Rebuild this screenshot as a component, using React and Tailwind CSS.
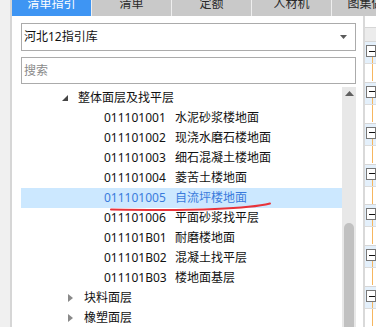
import React from "react";

const tabs = ["清单", "定额", "人材机", "图集做法"];

const items = [
    { code: "011101001", name: "水泥砂浆楼地面" },
    { code: "011101002", name: "现浇水磨石楼地面" },
    { code: "011101003", name: "细石混凝土楼地面" },
    { code: "011101004", name: "菱苦土楼地面" },
    { code: "011101005", name: "自流坪楼地面", selected: true },
    { code: "011101006", name: "平面砂浆找平层" },
    { code: "011101B01", name: "耐磨楼地面" },
    { code: "011101B02", name: "混凝土找平层" },
    { code: "011101B03", name: "楼地面基层" },
];

const Expanded = () => (
    <svg width="6" height="6" viewBox="0 0 6 6" className="block">
        <polygon points="6,0 6,6 0,6" fill="#454545" />
    </svg>
);

const Collapsed = () => (
    <svg width="5" height="8" viewBox="0 0 5 8" className="block">
        <polygon points="0,0 5,4 0,8" fill="#8a8a8a" />
    </svg>
);

const RightGroup = () => (
    <div className="flex flex-col h-[46px] border-t border-[#d6d6d6]">
        <div className="bg-[#e4f0fb] border-b border-[#dcdcdc] h-[22px] pt-[3px] flex flex-col">
            <div className="h-[12px] ml-[1px] border border-[#777777] bg-white flex items-center pl-[2px]">
                <div className="w-[8px] h-[1px] bg-[#111]" />
            </div>
            <div className="ml-[7px] w-[1px] flex-1 bg-[#f6b65e]" />
        </div>
        <div className="ml-[7px] w-[1px] h-[17px] bg-[#f6b65e]" />
    </div>
);

const App = () => {
    return (
        <div className="w-[376px] h-[327px] overflow-hidden flex bg-white text-[12px] text-[#111] relative font-['Noto_Sans','Noto_Sans_CJK_SC',sans-serif]">
            <div className="w-[12px] shrink-0 bg-[#f0f0f0] border-r-2 border-[#d6d6d6]" />
            <div className="flex-1 flex flex-col min-w-0">
                {/* tab bar */}
                <div className="h-[16px] shrink-0 flex bg-[#eeeeee] overflow-hidden">
                    <div className="w-[79px] shrink-0 bg-[#3e95f3] text-white flex justify-center leading-[12px] -mt-[2px]">
                        清单指引
                    </div>
                    {tabs.map((t) => (
                        <div
                            key={t}
                            className="w-[79px] shrink-0 ml-[1px] bg-[#c9c9c9] text-[#2a2a2a] flex justify-center leading-[12px] -mt-[2px] pt-[2px]"
                        >
                            <span className="-mt-[2px]">{t}</span>
                        </div>
                    ))}
                </div>
                <div className="flex flex-1 min-h-0">
                    {/* main panel */}
                    <div className="w-[351px] shrink-0 pl-[9px] pr-[7px] pt-[7px] flex flex-col">
                        <div className="h-[28px] border border-[#ababab] flex items-center justify-between pl-[2px] pr-[8px]">
                            <span>河北12指引库</span>
                            <svg width="7" height="4" viewBox="0 0 7 4">
                                <polygon points="0,0 7,0 3.5,4" fill="#5a5a5a" />
                            </svg>
                        </div>
                        <div className="h-[27px] mt-[6px] border border-[#ababab] flex items-center pl-[2px] text-[#8a8a8a]">
                            搜索
                        </div>
                        <div className="flex flex-1 mt-[3px] min-h-0">
                            <div className="flex-1 pt-[1px] overflow-hidden">
                                <div className="h-[20px] flex items-center">
                                    <div className="w-[47px] shrink-0 flex justify-end pr-[0px]">
                                        <Expanded />
                                    </div>
                                    <span className="ml-[10px]">整体面层及找平层</span>
                                </div>
                                {items.map((it) => (
                                    <div
                                        key={it.code}
                                        className={`h-[20px] flex items-center pl-[83px] ${
                                            it.selected ? "bg-[#cce8ff] text-[#3a7bdc]" : ""
                                        }`}
                                    >
                                        <span className="w-[71px] shrink-0">{it.code}</span>
                                        <span>{it.name}</span>
                                    </div>
                                ))}
                                {["块料面层", "橡塑面层"].map((n) => (
                                    <div key={n} className="h-[20px] flex items-center">
                                        <div className="w-[52px] shrink-0 flex justify-end">
                                            <Collapsed />
                                        </div>
                                        <span className="ml-[11px]">{n}</span>
                                    </div>
                                ))}
                            </div>
                            {/* scrollbar */}
                            <div className="w-[14px] shrink-0 bg-[#e8e8e8] flex flex-col items-center">
                                <svg width="9" height="5" viewBox="0 0 9 5" className="mt-[4px]">
                                    <polygon points="0,5 9,5 4.5,0" fill="#606060" />
                                </svg>
                                <div className="mt-[127px] w-[10px] flex-1 bg-[#c1c1c1] rounded-t-full" />
                            </div>
                        </div>
                    </div>
                    {/* right strip */}
                    <div className="flex-1 border-l-2 border-[#d9d9d9] flex flex-col overflow-hidden">
                        <div className="h-[11px] shrink-0" />
                        <div className="h-[14px] shrink-0 bg-[#ececec] border-t border-[#d6d6d6]" />
                        {Array.from({ length: 7 }).map((_, i) => (
                            <RightGroup key={i} />
                        ))}
                    </div>
                </div>
            </div>
            {/* hand-drawn red mark */}
            <svg className="absolute left-0 top-0 pointer-events-none" width="376" height="327">
                <path
                    d="M111 209.5 C140 210, 180 210.5, 215 209 C240 208, 258 206.5, 270 203.5"
                    stroke="#e8333a"
                    strokeWidth="2"
                    fill="none"
                    strokeLinecap="round"
                />
            </svg>
        </div>
    );
};

export default App;
